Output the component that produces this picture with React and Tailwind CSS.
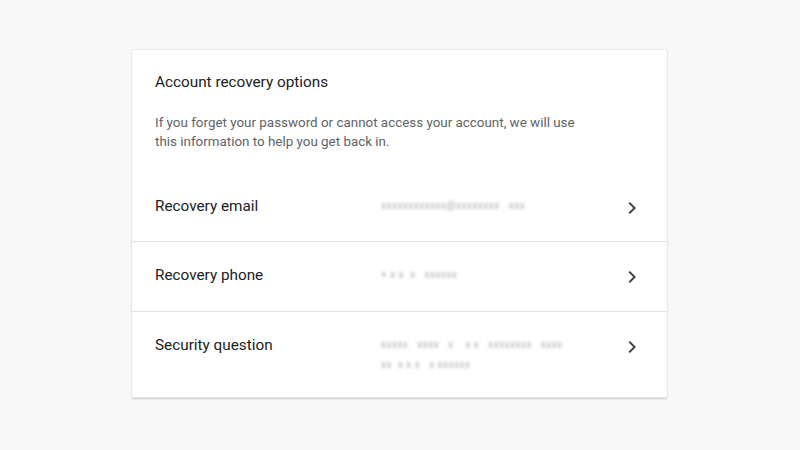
import React from "react";

function Chevron() {
  return (
    <div className="h-[20px] w-[24px] mt-[2px] flex items-center shrink-0">
      <svg width="24" height="24" viewBox="0 0 24 24" className="block shrink-0">
        <path d="M9.2 6.6 L14.6 12 L9.2 17.4" fill="none" stroke="#3c4043" strokeWidth="2" />
      </svg>
    </div>
  );
}

function Row({ label, lines, cls }) {
  return (
    <div className={`flex pl-[23px] pr-[23px] ${cls}`}>
      <div className="w-[226px] text-[15.3px] leading-[20px] text-[#202124]">{label}</div>
      <div className="flex-1 flex flex-col">
        {lines.map((l, i) => (
          <div key={i} className="text-[10px] leading-[20px] text-[#a8acb2] blur-[1.4px] tracking-[0.5px] select-none whitespace-pre">
            {l}
          </div>
        ))}
      </div>
      <Chevron />
    </div>
  );
}

export default function App() {
  return (
    <div className="w-[800px] h-[450px] bg-[#f8f8f8] pt-[50px]" style={{ fontFamily: "Roboto, 'Liberation Sans', sans-serif" }}>
      <div className="ml-[132px] w-[535px] h-[347px] bg-white rounded-[2px] shadow-[0_0_0_1px_#e8e8e8,0_2px_2px_rgba(0,0,0,0.22)] flex flex-col">
        <div className="h-[122px] pl-[23px] pt-[21px]">
          <div className="text-[15.3px] leading-[22px] text-[#202124]">Account recovery options</div>
          <div className="mt-[20px] text-[13.4px] leading-[19px] text-[#5f6368] w-[430px]">
            If you forget your password or cannot access your account, we will use this information to help you get back in.
          </div>
        </div>
        <Row cls="h-[70px] pt-[24px] border-b border-[#e2e2e2]" label="Recovery email" lines={["xxxxxxxxxxxx@xxxxxxxx . xxx"]} />
        <Row cls="h-[70px] pt-[23px] border-b border-[#e2e2e2]" label="Recovery phone" lines={["+ x x  x   xxxxxx"]} />
        <Row cls="h-[85px] pt-[23px]" label="Security question" lines={["xxxxx   xxxx   x    x x   xxxxxxxx   xxxx", "xx  x x x   x xxxxxx"]} />
      </div>
    </div>
  );
}
